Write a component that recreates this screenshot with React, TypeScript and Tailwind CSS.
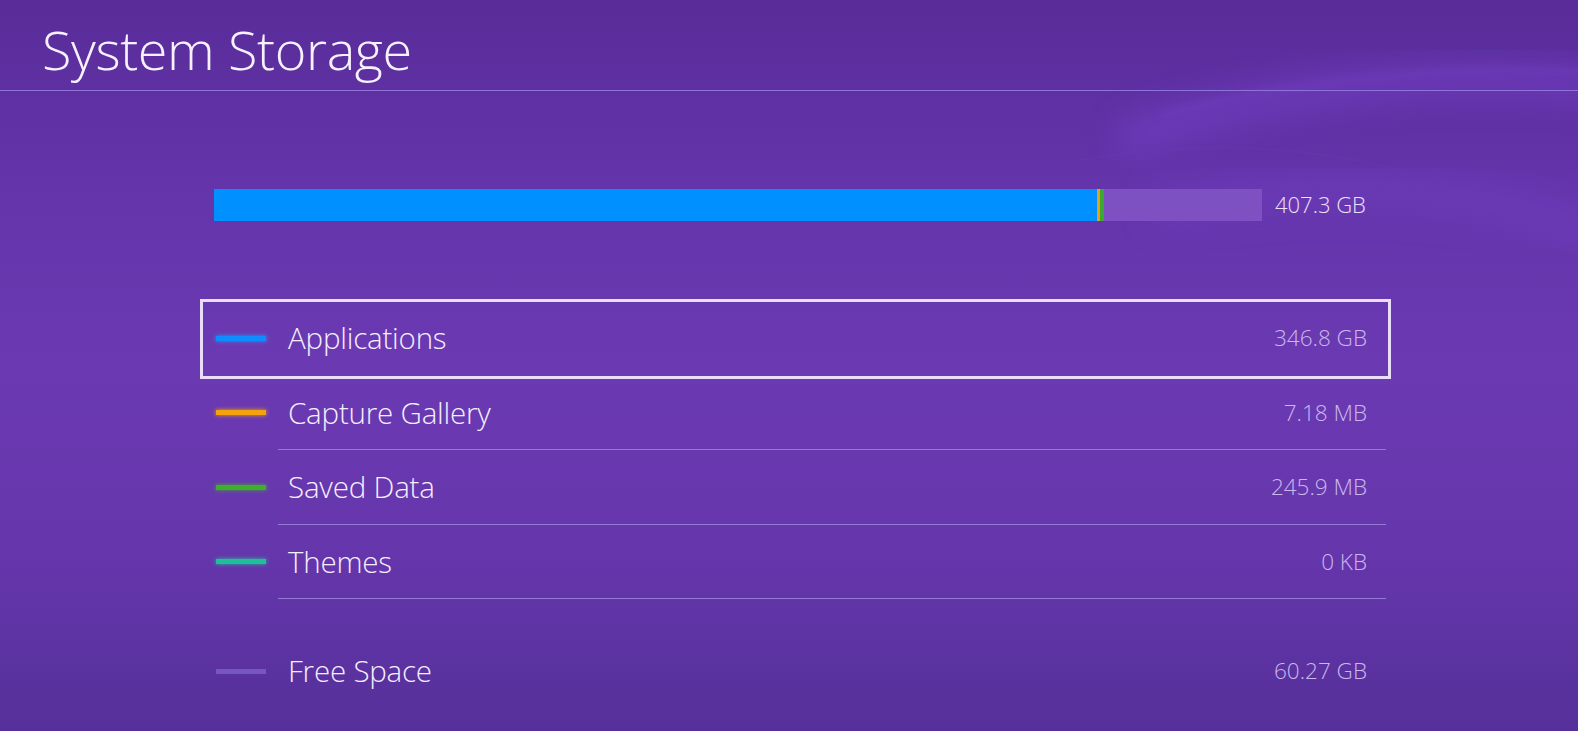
import React from "react";

type Row = { label: string; value: string; color: string; glow: string; selected?: boolean };

const rows: Row[] = [
  { label: "Applications", value: "346.8 GB", color: "bg-[#0d8dff]", glow: "shadow-[0_0_4px_#2a9bff]", selected: true },
  { label: "Capture Gallery", value: "7.18 MB", color: "bg-[#f4a20e]", glow: "shadow-[0_0_4px_#f4a20e]" },
  { label: "Saved Data", value: "245.9 MB", color: "bg-[#3fae2a]", glow: "shadow-[0_0_4px_#3fae2a]" },
  { label: "Themes", value: "0 KB", color: "bg-[#1fbf98]", glow: "shadow-[0_0_4px_#1fbf98]" },
];

function StorageRow({ row, separator }: { row: Row; separator: boolean }) {
  return (
    <div className="relative flex h-[74.5px] items-center">
      {row.selected && (
        <div className="pointer-events-none absolute -top-[2px] -bottom-[3px] left-0 right-0 border-[3px] border-[#e9ddf7]" />
      )}
      <div className="ml-[16px] w-[50px] h-[5px] rounded-[1px] shrink-0">
        <div className={`h-full w-full ${row.color} ${row.glow}`} />
      </div>
      <div className="ml-[22px] text-[29.5px] font-light text-[#f5eefd] tracking-[-0.2px]">{row.label}</div>
      <div className="ml-auto mr-[24px] text-[22.5px] font-light text-[#cbb7ee]">{row.value}</div>
      {separator && (
        <div className="absolute bottom-0 left-[78px] right-[5px] h-px bg-[#9479d6]" />
      )}
    </div>
  );
}

export default function App() {
  return (
    <div
      className="relative w-[1578px] h-[731px] overflow-hidden bg-[linear-gradient(180deg,#592c99_0%,#6334aa_25%,#6b3ab3_50%,#6636ac_75%,#55309a_100%)]"
      style={{ fontFamily: '"Open Sans", "Noto Sans", sans-serif' }}
    >
      <svg className="pointer-events-none absolute inset-0" width="1578" height="731" viewBox="0 0 1578 731">
        <defs>
          <filter id="b1" x="-20%" y="-50%" width="140%" height="200%">
            <feGaussianBlur stdDeviation="16" />
          </filter>
          <filter id="b2" x="-20%" y="-50%" width="140%" height="200%">
            <feGaussianBlur stdDeviation="4" />
          </filter>
        </defs>
        <path d="M1120 140 C 1280 85, 1430 72, 1600 85" stroke="#7b44d4" strokeWidth="34" fill="none" opacity="0.45" filter="url(#b1)" />
        <path d="M1150 210 C 1320 175, 1460 185, 1600 230" stroke="#7843cc" strokeWidth="44" fill="none" opacity="0.3" filter="url(#b1)" />
        <path d="M1160 115 C 1320 75, 1460 65, 1600 72" stroke="#8a5ae0" strokeWidth="3" fill="none" opacity="0.3" filter="url(#b2)" />
        <path d="M1080 160 C 1200 140, 1300 145, 1400 170" stroke="#6a3bb8" strokeWidth="1" fill="none" opacity="0.4" />
      </svg>

      <div className="relative">
        <header className="h-[91px] border-b border-[#9073d8] pl-[42px] flex items-end pb-[3px]">
          <h1 className="text-[54px] font-light leading-none pb-[11px] text-[#f6f0ff] tracking-[-0.4px]">System Storage</h1>
        </header>

        <div className="mt-[97px] ml-[214px] flex items-center">
          <div className="flex h-[32px] w-[1048px] bg-[#7d51c2]">
            <div className="w-[883px] h-full bg-[#0090ff]" />
            <div className="w-[3px] h-full bg-[#e0a21c]" />
            <div className="w-[4px] h-full bg-[#3da830]" />
          </div>
          <div className="ml-[13px] text-[22px] font-light text-[#ebe2fa]">407.3 GB</div>
        </div>

        <div className="mt-[80px] ml-[200px] w-[1191px]">
          {rows.map((r, i) => (
            <StorageRow key={r.label} row={r} separator={i > 0} />
          ))}
          <div className="mt-[35px] flex h-[74px] items-center">
            <div className="ml-[16px] w-[50px] h-[5px] bg-[#7656c0]" />
            <div className="ml-[22px] text-[29.5px] font-light text-[#f5eefd] tracking-[-0.2px]">Free Space</div>
            <div className="ml-auto mr-[24px] text-[22.5px] font-light text-[#cbb7ee]">60.27 GB</div>
          </div>
        </div>
      </div>
    </div>
  );
}
